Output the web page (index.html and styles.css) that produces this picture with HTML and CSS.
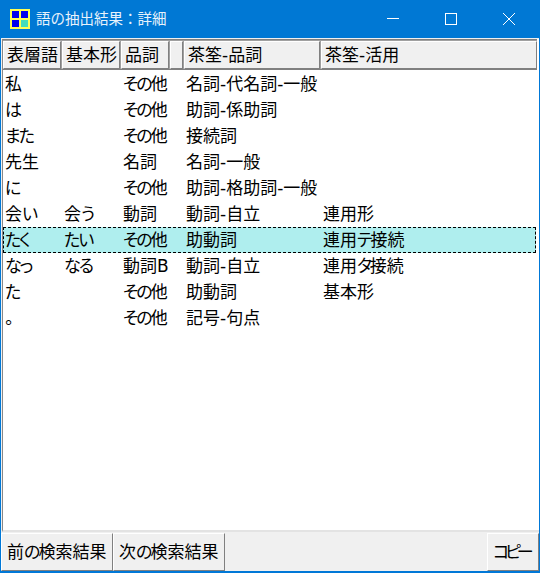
FILE: index.html
```html
<!DOCTYPE html>
<html lang="ja">
<head>
<meta charset="utf-8">
<title>語の抽出結果：詳細</title>
<link rel="stylesheet" href="styles.css">
</head>
<body>
<div class="window">
  <div class="titlebar">
    <div class="appicon"><i></i><i></i><i></i><i class="teal"></i></div>
    <div class="title">語の抽出結果：詳細</div>
    <div class="caption">
      <svg class="cap" viewBox="0 0 58 38" width="58" height="38"><path d="M23 18.5h12" stroke="#fff" fill="none"/></svg>
      <svg class="cap" viewBox="0 0 58 38" width="58" height="38"><rect x="23.5" y="13.5" width="11" height="11" stroke="#fff" fill="none"/></svg>
      <svg class="cap" viewBox="0 0 58 38" width="58" height="38"><path d="M23 13l12 12M35 13L23 25" stroke="#fff" fill="none"/></svg>
    </div>
  </div>
  <div class="listview">
    <div class="row header">
      <div class="hc c1">表層語</div><div class="hc c2">基本形</div><div class="hc c3">品詞</div><div class="hc c4"></div><div class="hc c5">茶筌-品詞</div><div class="hc c6">茶筌-活用</div>
    </div>
    <div class="body">
      <div class="row item"><div class="c1">私</div><div class="c2"></div><div class="c3"><span class="kana">その</span>他</div><div class="c4"></div><div class="c5">名詞-代名詞-一般</div><div class="c6"></div></div>
      <div class="row item"><div class="c1"><span class="kana">は</span></div><div class="c2"></div><div class="c3"><span class="kana">その</span>他</div><div class="c4"></div><div class="c5">助詞-係助詞</div><div class="c6"></div></div>
      <div class="row item"><div class="c1"><span class="kana">また</span></div><div class="c2"></div><div class="c3"><span class="kana">その</span>他</div><div class="c4"></div><div class="c5">接続詞</div><div class="c6"></div></div>
      <div class="row item"><div class="c1">先生</div><div class="c2"></div><div class="c3">名詞</div><div class="c4"></div><div class="c5">名詞-一般</div><div class="c6"></div></div>
      <div class="row item"><div class="c1"><span class="kana">に</span></div><div class="c2"></div><div class="c3"><span class="kana">その</span>他</div><div class="c4"></div><div class="c5">助詞-格助詞-一般</div><div class="c6"></div></div>
      <div class="row item"><div class="c1">会<span class="kana">い</span></div><div class="c2">会<span class="kana">う</span></div><div class="c3">動詞</div><div class="c4"></div><div class="c5">動詞-自立</div><div class="c6">連用形</div></div>
      <div class="row item selected"><div class="c1"><span class="kana">たく</span></div><div class="c2"><span class="kana">たい</span></div><div class="c3"><span class="kana">その</span>他</div><div class="c4"></div><div class="c5">助動詞</div><div class="c6">連用<span class="kana">テ</span>接続</div></div>
      <div class="row item"><div class="c1"><span class="kana">なっ</span></div><div class="c2"><span class="kana">なる</span></div><div class="c3">動詞B</div><div class="c4"></div><div class="c5">動詞-自立</div><div class="c6">連用<span class="kana">タ</span>接続</div></div>
      <div class="row item"><div class="c1"><span class="kana">た</span></div><div class="c2"></div><div class="c3"><span class="kana">その</span>他</div><div class="c4"></div><div class="c5">助動詞</div><div class="c6">基本形</div></div>
      <div class="row item"><div class="c1">。</div><div class="c2"></div><div class="c3"><span class="kana">その</span>他</div><div class="c4"></div><div class="c5">記号-句点</div><div class="c6"></div></div>
    </div>
  </div>
  <div class="toolbar">
    <div class="btn prev">前<span class="kana">の</span>検索結果</div>
    <div class="btn next">次<span class="kana">の</span>検索結果</div>
    <div class="spacer"></div>
    <div class="btn copy">コピー</div>
  </div>
</div>
</body>
</html>
```

FILE: styles.css
```css
* { box-sizing: border-box; }
html, body { margin: 0; padding: 0; }
body { width: 540px; height: 573px; overflow: hidden; background: #f0f0f0; font-family: "DejaVu Sans", "Noto Sans CJK JP", sans-serif; font-size: 17px; font-feature-settings: "palt" 1; color: #000; }
.kana { letter-spacing: -2px; }
.window { width: 540px; height: 573px; display: flex; flex-direction: column; border: 1px solid #0078d7; border-top: 0; border-width: 0 1px 2px 1px; }
.titlebar { height: 38px; margin: 0 -1px; background: #0078d4; display: flex; align-items: center; color: #fff; flex: none; }
.appicon { width: 20px; height: 20px; margin-left: 10px; background: #ffff55; padding: 2px; display: grid; grid-template-columns: 7px 7px; grid-template-rows: 7px 7px; gap: 2px; }
.appicon i { background: #0000ee; display: block; }
.appicon i.teal { background: #44ddbb; }
.title { margin-left: 6px; font-size: 14.5px; font-feature-settings: normal; line-height: 38px; flex: 1; white-space: nowrap; color: #e8f2fb; }
.caption { display: flex; padding-right: 2px; }
.cap { display: block; }
.listview { flex: 1; margin: 1px 0 0 1px; background: #fff; border-left: 1px solid #888; border-bottom: 2px solid #e3e3e3; min-height: 0; display: flex; flex-direction: column; }
.row { display: flex; }
.header { height: 31px; flex: none; background: #a0a0a0; padding: 1px 0 0 0; border-top: 1px solid #808080; border-bottom: 1px solid #808080; width: 534px; }
.hc { background: #f0f0f0; border: 1px solid #fff; border-right-color: #808080; border-bottom-color: #808080; height: 28px; line-height: 26px; padding-left: 3px; white-space: nowrap; overflow: hidden; margin-right: 1px; }
.c1 { width: 59px; flex: none; }
.c2 { width: 59px; flex: none; }
.c3 { width: 49px; flex: none; }
.c4 { width: 14px; flex: none; }
.c5 { width: 137px; flex: none; }
.c6 { width: 215px; flex: none; }
.header .c1 { width: 58px; }
.header .c2 { width: 58px; }
.header .c3 { width: 48px; }
.header .c4 { width: 13px; padding: 0; }
.header .c5 { width: 136px; }
.header .c6 { width: 216px; margin-right: 0; }
.body { flex: 1; padding-top: 1px; }
.item { height: 26px; line-height: 26px; white-space: nowrap; width: 533px; }
.item > div { padding-left: 2px; }
.selected { background: #afeeee; outline: 1px dashed #000; outline-offset: -1px; }
.toolbar { height: 38px; display: flex; flex: none; background: #f0f0f0; align-items: stretch; margin-top: 1px; }
.btn { background: #f0f0f0; border-right: 1px solid #808080; border-bottom: 1px solid #808080; border-top: 1px solid #fff; border-left: 1px solid #fff; padding-left: 5px; line-height: 36px; white-space: nowrap; }
.prev { width: 112px; }
.next { width: 112px; }
.spacer { flex: 1; }
.copy { width: 52px; letter-spacing: -4px; }
```
